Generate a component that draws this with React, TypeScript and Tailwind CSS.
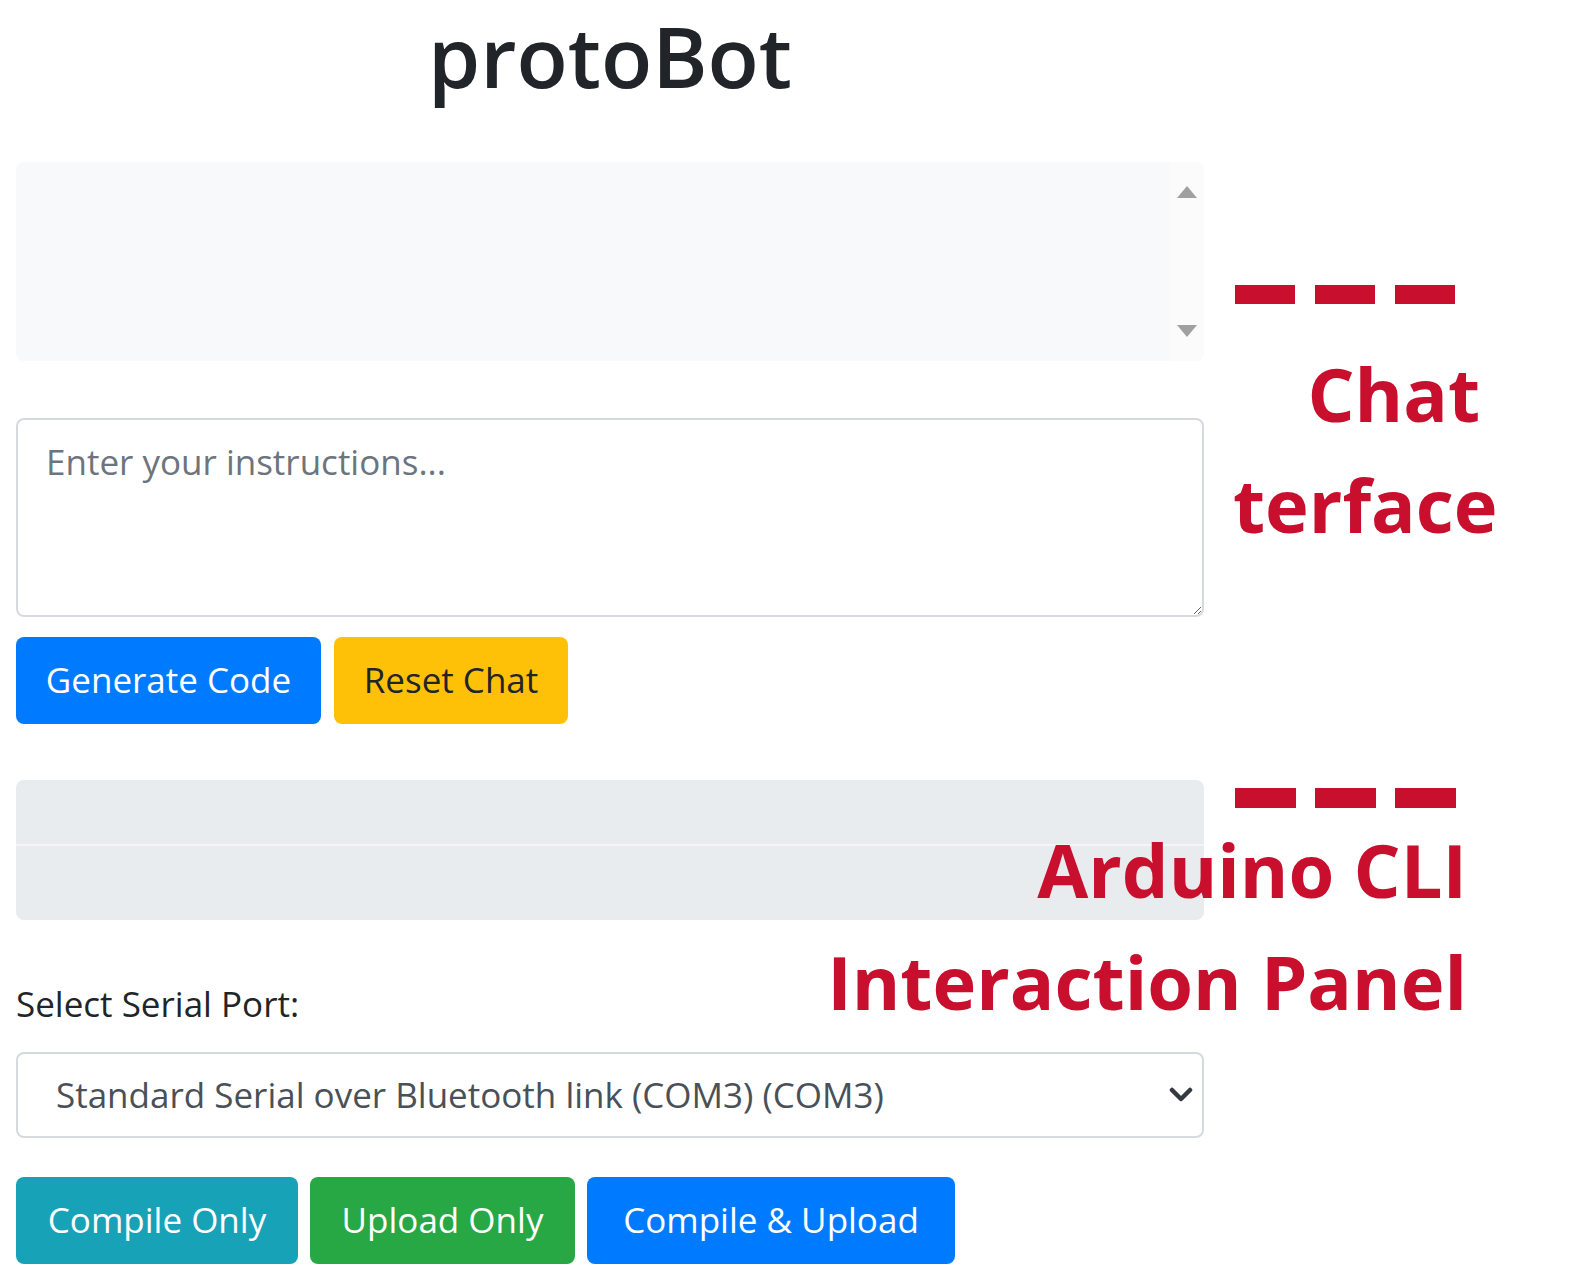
export default function App() {
  return (
    <div className="relative min-h-screen bg-white font-['Open_Sans','Noto_Sans',sans-serif] text-[#212529]">
      <div className="ml-[16px] w-[1188px] pt-[15px]">
        {/* title */}
        <h1 className="text-center text-[84px] leading-[82px] font-semibold">protoBot</h1>

        {/* chat log */}
        <div className="mt-[65px] flex h-[199px] overflow-hidden rounded-lg bg-[#f8f9fa]">
          <div className="flex-1" />
          <div className="flex w-[34px] flex-col items-center justify-between bg-[#fbfbfc] py-[24px]">
            <div className="h-0 w-0 border-x-[10px] border-b-[12px] border-x-transparent border-b-[#a0a0a0]" />
            <div className="h-0 w-0 border-x-[10px] border-t-[12px] border-x-transparent border-t-[#a0a0a0]" />
          </div>
        </div>

        {/* instructions */}
        <textarea
          className="mt-[57px] block h-[199px] w-full rounded-lg border-2 border-[#d6dadf] bg-white px-[28px] pt-[17px] text-[35px] leading-[50px] outline-none placeholder:text-[#6c757d]"
          placeholder="Enter your instructions..."
        />

        <div className="mt-[20px] flex gap-[13px]">
          <button className="flex h-[87px] w-[305px] items-center justify-center rounded-lg bg-[#007bff] text-[35px] text-white">
            Generate Code
          </button>
          <button className="flex h-[87px] w-[234px] items-center justify-center rounded-lg bg-[#ffc107] text-[35px] text-[#212529]">
            Reset Chat
          </button>
        </div>

        {/* cli output */}
        <div className="mt-[56px] flex h-[140px] flex-col overflow-hidden rounded-lg bg-[#e9ecef]">
          <div className="h-[66px] border-b-2 border-[#f4f5f7]" />
          <div className="flex-1" />
        </div>

        <div className="mt-[64px] text-[35px] leading-[40px]">Select Serial Port:</div>

        <div className="mt-[28px] flex h-[86px] items-center justify-between rounded-lg border-2 border-[#d6dadf] bg-white pl-[38px] pr-[8px]">
          <span className="text-[35px] text-[#495057]">Standard Serial over Bluetooth link (COM3) (COM3)</span>
          <svg width="24" height="16" viewBox="0 0 24 16" className="mr-[1px]">
            <path d="M3 3 L12 12 L21 3" fill="none" stroke="#343a40" strokeWidth="4.5" strokeLinecap="round" strokeLinejoin="round" />
          </svg>
        </div>

        <div className="mt-[39px] flex gap-[12px]">
          <button className="flex h-[87px] w-[282px] items-center justify-center rounded-lg bg-[#17a2b8] text-[35px] text-white">
            Compile Only
          </button>
          <button className="flex h-[87px] w-[265px] items-center justify-center rounded-lg bg-[#28a745] text-[35px] text-white">
            Upload Only
          </button>
          <button className="flex h-[87px] w-[368px] items-center justify-center rounded-lg bg-[#007bff] text-[35px] text-white">
            Compile &amp; Upload
          </button>
        </div>
      </div>

      {/* annotations */}
      <div className="absolute left-[1235px] top-[285px] flex gap-[20px]">
        <div className="h-[19px] w-[60px] bg-[#c8102e]" />
        <div className="h-[19px] w-[60px] bg-[#c8102e]" />
        <div className="h-[19px] w-[60px] bg-[#c8102e]" />
      </div>
      <div className="absolute right-[107px] top-[352px] text-[74px] font-bold leading-[84px] text-[#c8102e]">
        Chat
      </div>
      <div className="absolute left-[1233px] top-[463px] text-[74px] font-bold leading-[84px] text-[#c8102e]">
        terface
      </div>

      <div className="absolute left-[1235px] top-[788px] flex gap-[19px]">
        <div className="h-[20px] w-[61px] bg-[#c8102e]" />
        <div className="h-[20px] w-[61px] bg-[#c8102e]" />
        <div className="h-[20px] w-[61px] bg-[#c8102e]" />
      </div>
      <div className="absolute right-[120px] top-[814px] text-right text-[74px] font-bold leading-[112px] text-[#c8102e]">
        Arduino CLI
        <br />
        Interaction Panel
      </div>
    </div>
  );
}
